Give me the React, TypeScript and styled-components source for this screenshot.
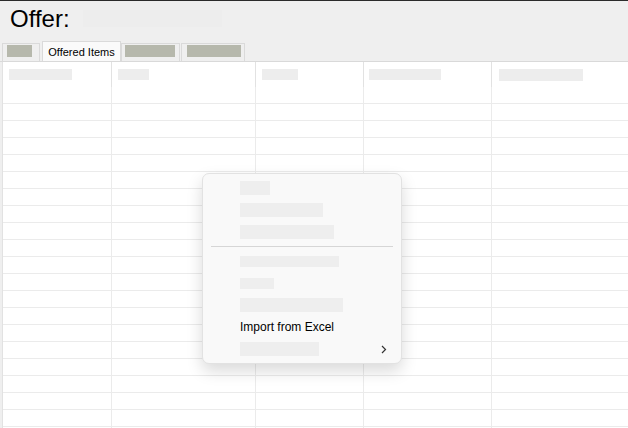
import styled, { createGlobalStyle } from "styled-components";

const GlobalStyle = createGlobalStyle`
    html, body {
        margin: 0;
        padding: 0;
        background: #efefef;
        font-family: "Liberation Sans", Arial, sans-serif;
    }
`;

const Page = styled.div`
    width: 628px;
    height: 428px;
    overflow: hidden;
    position: relative;
    background: #efefef;
    border-top: 1px solid #2b2b2b;
    box-sizing: border-box;
    display: flex;
    flex-direction: column;
`;

const TitleRow = styled.div`
    height: 40px;
    padding: 4px 0 0 10px;
    box-sizing: border-box;
    display: flex;
    align-items: flex-start;
`;

const Title = styled.h1`
    margin: 0;
    font-size: 24px;
    line-height: 28px;
    font-weight: normal;
    color: #000;
`;

const TitleBlank = styled.span`
    width: 139px;
    height: 17px;
    margin: 5px 0 0 13px;
    background: #ededed;
`;

const TabStrip = styled.div`
    height: 21px;
    display: flex;
    align-items: flex-end;
    border-bottom: 1px solid #d9d9d9;
    box-sizing: border-box;
`;

const Tab = styled.div<{ $active?: boolean; $w: number; $gap: number }>`
    width: ${p => p.$w}px;
    height: ${p => (p.$active ? 20 : 18)}px;
    margin-left: ${p => p.$gap}px;
    box-sizing: border-box;
    border: 1px solid #dadada;
    border-bottom: none;
    background: ${p => (p.$active ? "#fafafa" : "#efefef")};
    display: flex;
    align-items: ${p => (p.$active ? "center" : "flex-start")};
    justify-content: ${p => (p.$active ? "center" : "flex-start")};
    padding-top: 1px;
    font-size: 11px;
    color: #000;
`;

const TabBlank = styled.span<{ $w: number; $left: number }>`
    width: ${p => p.$w}px;
    height: 12px;
    margin-left: ${p => p.$left}px;
    background: #b6b8ac;
`;

const Grid = styled.div`
    flex: 1;
    margin-left: 2px;
    background: #fff;
    border-left: 1px solid #e2e2e2;
    overflow: hidden;
`;

const cols = "108px 144px 108px 128px 1fr";

const HeadRow = styled.div`
    display: grid;
    grid-template-columns: ${cols};
    height: 25px;
`;

const HeadCell = styled.div<{ $first?: boolean; $pad: number }>`
    border-left: ${p => (p.$first ? "none" : "1px solid #e2e2e2")};
    padding: 7px 0 0 ${p => p.$pad}px;
    box-sizing: border-box;
`;

const HeadBlank = styled.div<{ $w: number; $h?: number }>`
    width: ${p => p.$w}px;
    height: ${p => p.$h ?? 11}px;
    background: #ededed;
`;

const Row = styled.div`
    display: grid;
    grid-template-columns: ${cols};
    height: 17px;
    box-sizing: border-box;
    border-bottom: 1px solid #ebebeb;
`;

const Cell = styled.div<{ $first?: boolean }>`
    border-left: ${p => (p.$first ? "none" : "1px solid #ebebeb")};
`;

const Menu = styled.div`
    position: absolute;
    left: 202px;
    top: 172px;
    width: 200px;
    height: 191px;
    box-sizing: border-box;
    background: #f9f9f9;
    border: 1px solid #e2e2e2;
    border-radius: 7px;
    box-shadow: 0 7px 16px rgba(0, 0, 0, 0.15);
    padding: 3px 0;
`;

const MenuItem = styled.div`
    height: 22px;
    display: flex;
    align-items: center;
    padding: 0 14px 0 37px;
    font-size: 12px;
    color: #000;
`;

const MenuBlank = styled.span<{ $w: number; $h: number }>`
    width: ${p => p.$w}px;
    height: ${p => p.$h}px;
    background: #eeeeee;
`;

const Separator = styled.div`
    height: 1px;
    margin: 3px 8px 3px;
    background: #d6d6d6;
`;

const Chevron = styled.svg`
    margin-left: auto;
`;

const headers = [
    { pad: 6, w: 63 },
    { pad: 6, w: 31 },
    { pad: 6, w: 36 },
    { pad: 5, w: 72 },
    { pad: 7, w: 84, h: 12 },
];

const rows = Array.from({ length: 21 }, (_, i) => i);

function App() {
    return (
        <Page>
            <GlobalStyle />
            <TitleRow>
                <Title>Offer:</Title>
                <TitleBlank />
            </TitleRow>
            <TabStrip>
                <Tab $w={38} $gap={2}>
                    <TabBlank $w={25} $left={4} />
                </Tab>
                <Tab $active $w={79} $gap={2}>Offered Items</Tab>
                <Tab $w={59} $gap={0}>
                    <TabBlank $w={50} $left={3} />
                </Tab>
                <Tab $w={64} $gap={1}>
                    <TabBlank $w={54} $left={5} />
                </Tab>
            </TabStrip>
            <Grid>
                <HeadRow>
                    {headers.map((h, i) => (
                        <HeadCell key={i} $first={i === 0} $pad={h.pad}>
                            <HeadBlank $w={h.w} $h={h.h} />
                        </HeadCell>
                    ))}
                </HeadRow>
                {rows.map(r => (
                    <Row key={r}>
                        {headers.map((_, i) => (
                            <Cell key={i} $first={i === 0} />
                        ))}
                    </Row>
                ))}
            </Grid>
            <Menu>
                <MenuItem><MenuBlank $w={30} $h={14} /></MenuItem>
                <MenuItem><MenuBlank $w={83} $h={14} /></MenuItem>
                <MenuItem><MenuBlank $w={94} $h={14} /></MenuItem>
                <Separator />
                <MenuItem><MenuBlank $w={99} $h={11} /></MenuItem>
                <MenuItem><MenuBlank $w={34} $h={11} /></MenuItem>
                <MenuItem><MenuBlank $w={103} $h={14} /></MenuItem>
                <MenuItem>Import from Excel</MenuItem>
                <MenuItem>
                    <MenuBlank $w={79} $h={14} />
                    <Chevron width="6" height="9" viewBox="0 0 6 9">
                        <path d="M1 1 L4.5 4.5 L1 8" fill="none" stroke="#333" strokeWidth="1.2" />
                    </Chevron>
                </MenuItem>
            </Menu>
        </Page>
    );
}

export default App;
